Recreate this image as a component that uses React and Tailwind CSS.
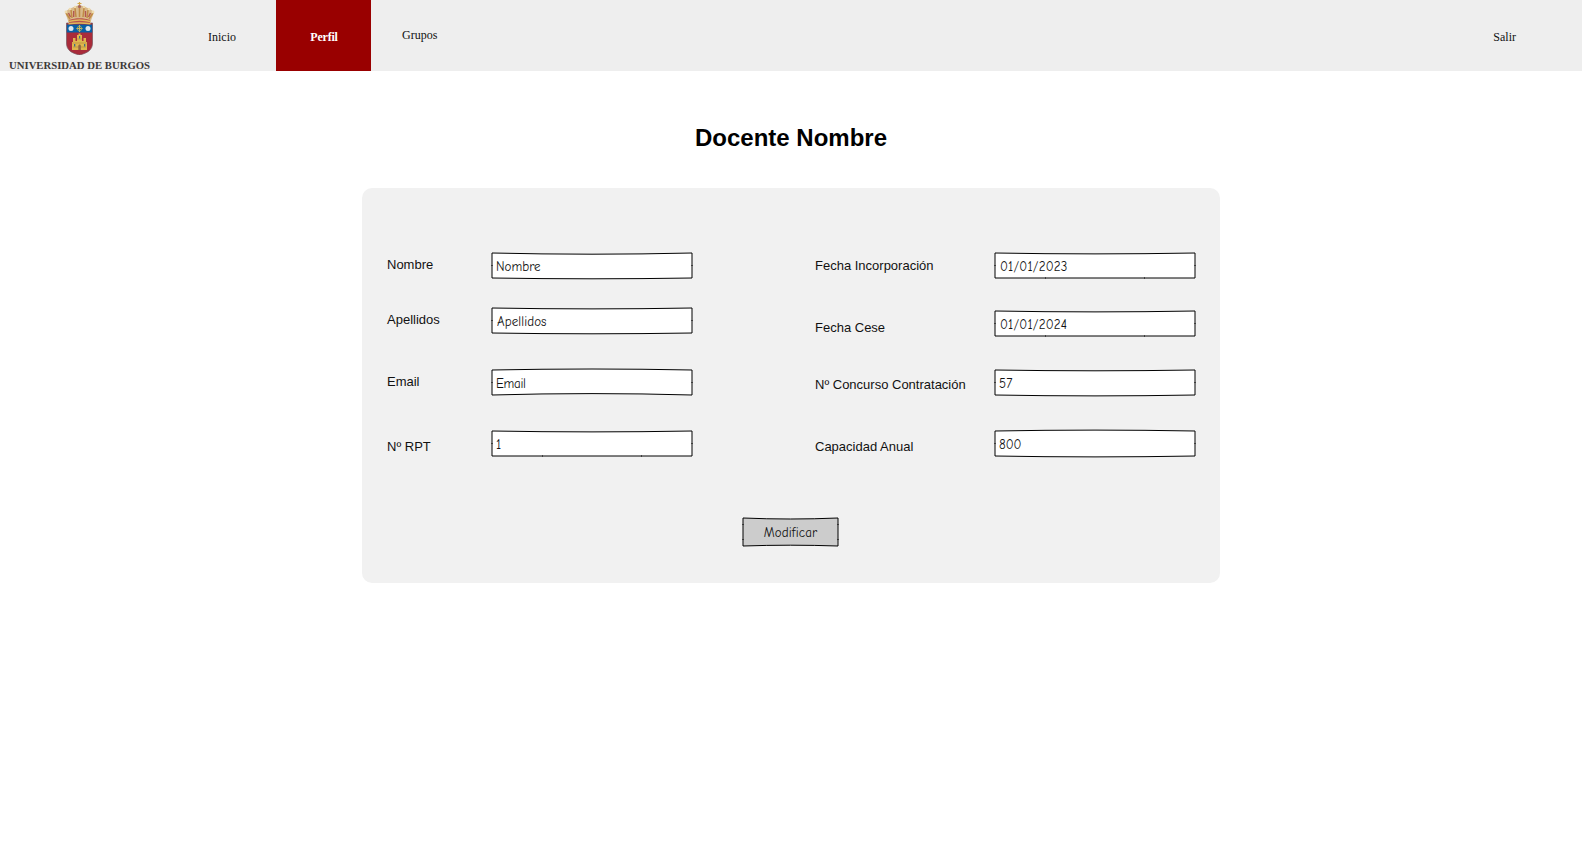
const HAND = "font-['Comic_Neue','Comic_Sans_MS','Open_Sans',sans-serif] text-[13px]";

// Hand-drawn rectangle: the top and bottom edges bow by a small amount.
function SketchBox({ w, h, top, bottom, fill, ticks }) {
  const l = 1;
  const r = 1 + w;
  const m = 1 + w / 2;
  const b = 1 + h;
  const q1 = l + w / 4;
  const q2 = r - w / 4;
  const t = 1 + top;
  const u = b + bottom;
  const path = `M${l} 1 Q${q1} ${t} ${m} ${t} Q${q2} ${t} ${r} 1 V${b} Q${q2} ${u} ${m} ${u} Q${q1} ${u} ${l} ${b} Z`;
  return (
    <svg
      className="absolute -left-px -top-px overflow-visible"
      width={w + 2}
      height={h + 2}
      fill="none"
      stroke="#000"
      aria-hidden="true"
    >
      <path d={path} fill={fill} strokeLinejoin="round" />
      <path d={ticks} strokeOpacity=".5" />
    </svg>
  );
}

function Field({ label, value, top, bottom, flat, row, labelPos, labelWidth, text }) {
  const ticks =
    "M0 13.5h2M200 13.5h2" + (flat ? "M51.5 25v2M150.5 25v2" : "");
  return (
    <div className={`flex items-start ${row}`}>
      <label className={`${labelWidth} ${labelPos} shrink-0 whitespace-nowrap text-[13px] leading-4`}>
        {label}
      </label>
      <div className="relative h-[25px] w-[200px]">
        <SketchBox w={200} h={25} top={top} bottom={bottom} fill="#fff" ticks={ticks} />
        <input
          defaultValue={value}
          className={`relative block h-[26px] w-full bg-transparent pt-px outline-none ${HAND} ${text}`}
        />
      </div>
    </div>
  );
}

function Crest() {
  return (
    <svg width="32" height="53" viewBox="0 0 32 53" aria-hidden="true">
      <path d="M2.500 21h26v20c0 7-5 10-13 12C7 51 2.500 48 2.500 41Z" fill="#a92b3a" stroke="#76555d" strokeWidth=".7" />
      <path d="M2.800 22.500h25.400v8H2.800Z" fill="#075fa5" />
      <path d="M4.500 20 1 10l4-3 6-2.500 4.500-1.500 4.500 1.500L26 7l4 3-3.500 10Z" fill="#d8b98a" />
      <path d="M5 18c7-2.500 14-2.500 21 0v3H5Z" fill="#b8524e" />
      <path d="M6 17 2 11M8 16 7 8M12 15l-1-9M15.500 15V5M19 15l1-9M23 16l1-8M25 17l4-6" fill="none" stroke="#c08a45" strokeWidth="1.500" />
      <path d="M4.500 19.500c7-2 15-2 22 0M4.500 21.800c7-1 15-1 22 0" fill="none" stroke="#e0b95a" strokeWidth="1.500" />
      <path d="M9.700 9v6M21.500 9v6M4.500 11l2 4M26.500 11l-2 4" stroke="#b25850" strokeWidth="1.400" />
      <g fill="#efdcae">
        <circle cx="2" cy="10" r="1.400" />
        <circle cx="6" cy="7" r="1.300" />
        <circle cx="11" cy="5" r="1.200" />
        <circle cx="20" cy="5" r="1.200" />
        <circle cx="25" cy="7" r="1.300" />
        <circle cx="29" cy="10" r="1.400" />
      </g>
      <path d="M15.500 0v4M13.500 1.500h4" stroke="#d4a645" strokeWidth="1.200" />
      <circle cx="15.500" cy="4.500" r="1.600" fill="#a5645c" />
      <circle cx="7" cy="26.500" r="2.500" fill="#dce7ef" />
      <circle cx="24" cy="26.500" r="2.500" fill="#dce7ef" />
      <path d="M15.500 23v7M12.500 26.500h6" stroke="#cdb85e" strokeWidth="1.200" />
      <circle cx="15.500" cy="26.500" r="2.300" fill="none" stroke="#9ca568" strokeWidth=".8" />
      <path d="M8 48v-8h1v-4h2.500v3h1.500v-6h1.500v-1.500h2V33H18v6h1.500v-3H22v4h1v8Z" fill="#dfb64d" />
      <path d="M8.500 41h14M13 37h5M9 45h13" stroke="#b58c3e" strokeWidth=".7" />
      <path d="M14.300 48v-4c0-2 2.600-2 2.600 0v4Z" fill="#936743" />
      <path d="M15 34h1.200v2.500H15ZM10 42h1.300v2.500H10ZM20 42h1.300v2.500H20Z" fill="#3d7184" />
    </svg>
  );
}

export default function App() {
  return (
    <div className="h-[858px] w-[1582px] bg-white font-['Liberation_Sans',Arial,sans-serif] text-[#111]">
      <header className="flex h-[71px] bg-[#eeeeee] font-['Liberation_Serif',serif] text-[12px] leading-4">
        <div className="flex w-[160px] shrink-0 flex-col items-center pt-0.5">
          <Crest />
          <svg className="mt-1" width="142" height="12" role="img" aria-label="Universidad de Burgos">
            <text
              x="0"
              y="10"
              textLength="141"
              lengthAdjust="spacingAndGlyphs"
              className="fill-[#3c3838] font-['Liberation_Serif',serif] text-[10.5px] font-bold"
            >
              UNIVERSIDAD DE BURGOS
            </text>
          </svg>
        </div>
        <nav className="flex grow">
          <a className="w-[116px] pl-12 pt-[29px]">Inicio</a>
          <a className="w-[95px] bg-[#990000] pl-px pt-[29px] text-center font-bold tracking-[-0.2px] text-white">Perfil</a>
          <a className="pl-[31px] pt-[27px]">Grupos</a>
          <a className="ml-auto pr-[66px] pt-[29px]">Salir</a>
        </nav>
      </header>

      <main className="flex flex-col items-center">
        <h1 className="mt-[51px] text-[24px] font-bold leading-8 text-black">Docente Nombre</h1>
        <section className="mt-[34px] flex h-[395px] w-[858px] flex-col rounded-[10px] bg-[#f1f1f1] px-[25px] pt-[65px]">
          <div className="flex justify-between">
            <div>
              <Field label="Nombre" value="Nombre" top={1.2} bottom={0.8} row="h-[55px]" labelPos="pt-[4px]" labelWidth="w-[105px]" text="pl-1" />
              <Field label="Apellidos" value="Apellidos" top={0.9} bottom={0.8} row="h-[62px]" labelPos="pt-[4px]" labelWidth="w-[105px]" text="pl-[5px] tracking-[0.1px]" />
              <Field label="Email" value="Email" top={-1} bottom={-1.4} row="h-[61px]" labelPos="pt-[4px]" labelWidth="w-[105px]" text="pl-1 tracking-[-0.3px]" />
              <Field label="Nº RPT" value="1" top={0.9} bottom={0} flat row="h-[25px]" labelPos="pt-[8px]" labelWidth="w-[105px]" text="pl-1" />
            </div>
            <div>
              <Field label="Fecha Incorporación" value="01/01/2023" top={0.9} bottom={0} flat row="h-[58px]" labelPos="pt-[5px]" labelWidth="w-[180px]" text="pl-[5px] tracking-[0.2px]" />
              <Field label="Fecha Cese" value="01/01/2024" top={0.9} bottom={0} flat row="h-[59px]" labelPos="pt-[9px]" labelWidth="w-[180px]" text="pl-[5px] tracking-[0.2px]" />
              <Field label="Nº Concurso Contratación" value="57" top={0.8} bottom={0.9} row="h-[61px]" labelPos="pt-[7px]" labelWidth="w-[180px]" text="pl-1 tracking-[0.2px]" />
              <Field label="Capacidad Anual" value="800" top={-0.9} bottom={0.9} row="h-[25px]" labelPos="pt-[8px]" labelWidth="w-[180px]" text="pl-1" />
            </div>
          </div>
          <button className="relative mr-px mt-[62px] flex h-7 w-[95px] items-center justify-center self-center pt-0.5">
            <SketchBox w={95} h={28} top={1} bottom={-0.8} fill="#ccc" ticks="M0 7.500h2M0 22.500h2M95 7.500h2M95 22.500h2" />
            <span className={`relative tracking-[0.15px] ${HAND}`}>Modificar</span>
          </button>
        </section>
      </main>
    </div>
  );
}
